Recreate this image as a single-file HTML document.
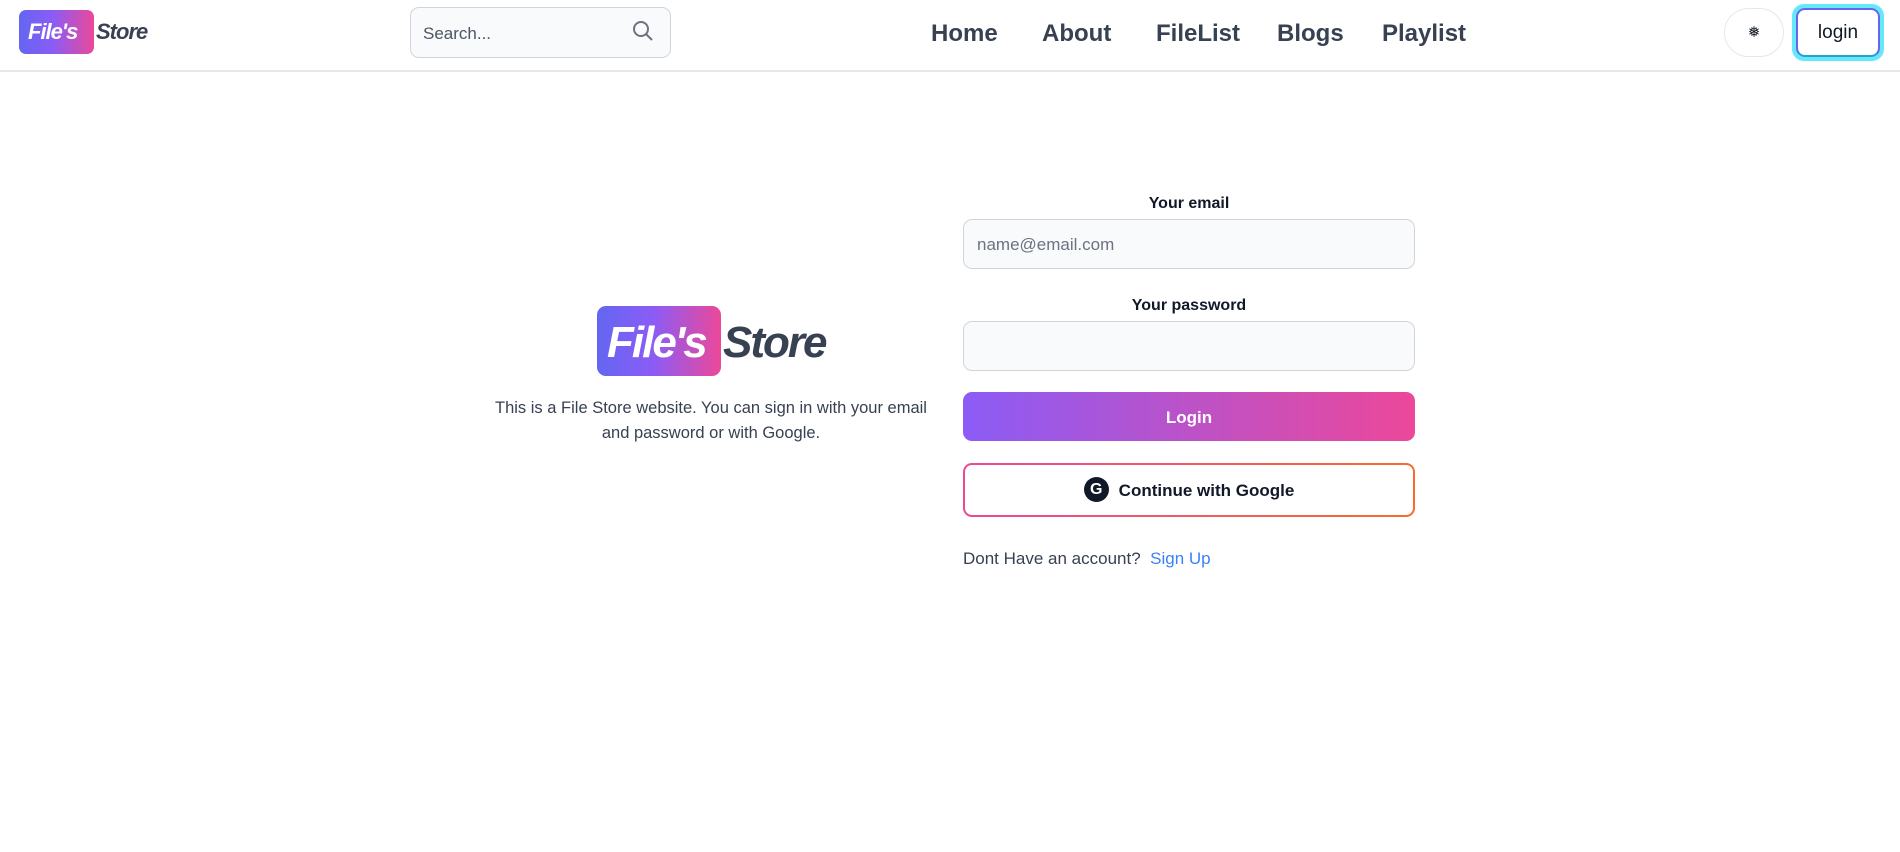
<!DOCTYPE html>
<html><head><meta charset="utf-8"><style>
*{box-sizing:border-box;margin:0;padding:0}
body{width:1900px;height:852px;background:#fff;font-family:"Liberation Sans",sans-serif;position:relative;overflow:hidden;color:#111827}
.nav{position:absolute;left:0;top:0;width:1900px;height:72px;border-bottom:2px solid #e5e7eb}
.abs{position:absolute}
.grad{background:linear-gradient(90deg,#6366f1,#8b5cf6 45%,#ec4899)}
.logo{font-style:italic;font-weight:bold;white-space:nowrap}
.navl{position:absolute;top:20px;font-size:24px;font-weight:bold;color:#374151}
</style></head><body>
<div class="nav">
 <div class="abs grad" style="left:19px;top:10px;width:75px;height:44px;border-radius:7px"></div>
 <div class="abs logo" style="left:28px;top:19px;font-size:22px;color:#fff;letter-spacing:-1px">File's</div>
 <div class="abs logo" style="left:96px;top:19px;font-size:22px;color:#374151;letter-spacing:-1px">Store</div>
 <div class="abs" style="left:410px;top:7px;width:261px;height:51px;border:1px solid #d1d5db;border-radius:9px;background:#f9fafb"></div>
 <div class="abs" style="left:423px;top:24px;font-size:17px;color:#4b5563">Search...</div>
 <svg class="abs" style="left:632px;top:20px" width="22" height="22" viewBox="0 0 22 22" fill="none" stroke="#6b7280" stroke-width="2"><circle cx="9" cy="9" r="7"/><path d="M14 14l6 6"/></svg>
 <div class="navl" style="left:931px">Home</div>
 <div class="navl" style="left:1042px">About</div>
 <div class="navl" style="left:1156px">FileList</div>
 <div class="navl" style="left:1277px">Blogs</div>
 <div class="navl" style="left:1382px">Playlist</div>
 <div class="abs" style="left:1724px;top:8px;width:60px;height:49px;border:1px solid #e5e7eb;border-radius:25px;text-align:center;line-height:47px;font-size:15px">&#10053;</div>
 <div class="abs" style="left:1792px;top:4px;width:92px;height:57px;border-radius:12px;background:#67e8f9"></div>
 <div class="abs" style="left:1796px;top:8px;width:84px;height:49px;border-radius:9px;background:#fff;border:2px solid #6366f1;border-bottom-color:#22a3d4;text-align:center;line-height:45px;font-size:19px">login</div>
</div>

<div class="abs grad" style="left:597px;top:306px;width:124px;height:70px;border-radius:9px"></div>
<div class="abs logo" style="left:607px;top:318px;font-size:44px;color:#fff;letter-spacing:-2px">File's</div>
<div class="abs logo" style="left:723px;top:318px;font-size:44px;color:#374151;letter-spacing:-2px">Store</div>
<div class="abs" style="left:471px;top:396px;width:480px;text-align:center;font-size:16.5px;line-height:25px;color:#374151">This is a File Store website. You can sign in with your email<br>and password or with Google.</div>

<div class="abs" style="left:963px;top:195px;width:452px;text-align:center;font-size:16px;font-weight:bold">Your email</div>
<div class="abs" style="left:963px;top:219px;width:452px;height:50px;border:1px solid #d1d5db;border-radius:9px;background:#f9fafb;padding:15px 13px;font-size:17px;color:#6b7280">name@email.com</div>
<div class="abs" style="left:963px;top:297px;width:452px;text-align:center;font-size:16px;font-weight:bold">Your password</div>
<div class="abs" style="left:963px;top:321px;width:452px;height:50px;border:1px solid #d1d5db;border-radius:9px;background:#f9fafb"></div>
<div class="abs" style="left:963px;top:392px;width:452px;height:49px;border-radius:9px;background:linear-gradient(90deg,#8b5cf6,#ec4899);color:#fff;text-align:center;line-height:51px;font-size:17px;font-weight:bold">Login</div>
<div class="abs" style="left:963px;top:463px;width:452px;height:54px;border-radius:9px;background:linear-gradient(90deg,#ec4899,#f97316 120%);padding:2px"><div style="width:100%;height:100%;background:#fff;border-radius:7px;text-align:center;line-height:52px;font-size:17px;font-weight:bold">
<span style="display:inline-block;width:25px;height:25px;border-radius:50%;background:#111827;color:#fff;font-size:16px;line-height:25px;vertical-align:middle;margin-right:10px;position:relative;top:-2px">G</span>Continue with Google</div></div>
<div class="abs" style="left:963px;top:549px;font-size:17px;color:#374151">Dont Have an account? &nbsp;<span style="color:#3b82f6">Sign Up</span></div>
</body></html>
